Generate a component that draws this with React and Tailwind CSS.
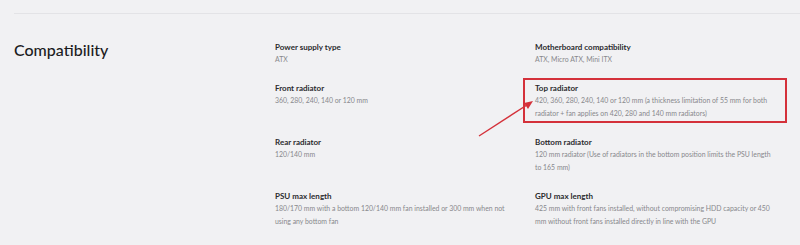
import React from "react";

/* spec rows: left column / right column */
const rows = [
  [
    { label: "Power supply type", lines: ["ATX"] },
    { label: "Motherboard compatibility", lines: ["ATX, Micro ATX, Mini ITX"] },
  ],
  [
    { label: "Front radiator", lines: ["360, 280, 240, 140 or 120 mm"] },
    {
      label: "Top radiator",
      lines: [
        "420, 360, 280, 240, 140 or 120 mm (a thickness limitation of 55 mm for both",
        "radiator + fan applies on 420, 280 and 140 mm radiators)",
      ],
      marked: true,
    },
  ],
  [
    { label: "Rear radiator", lines: ["120/140 mm"] },
    {
      label: "Bottom radiator",
      lines: [
        "120 mm radiator (Use of radiators in the bottom position limits the PSU length",
        "to 165 mm)",
      ],
    },
  ],
  [
    {
      label: "PSU max length",
      lines: [
        "180/170 mm with a bottom 120/140 mm fan installed or 300 mm when not",
        "using any bottom fan",
      ],
    },
    {
      label: "GPU max length",
      lines: [
        "425 mm with front fans installed, without compromising HDD capacity or 450",
        "mm without front fans installed directly in line with the GPU",
      ],
    },
  ],
];

const Spec = ({ item }) => (
  <div className="relative">
    <div className="text-[8px] leading-[12px] font-bold text-[#2b2b2e]">{item.label}</div>
    {item.lines.map((l, i) => (
      <div key={i} className="text-[6.9px] leading-[13px] text-[#88888c] whitespace-nowrap">
        {l}
      </div>
    ))}
    {item.marked && (
      <>
        <div className="absolute -left-[12px] -top-[4px] w-[264px] h-[45px] border-2 border-[#d4313a] pointer-events-none" />
        <svg
          className="absolute -left-[57px] top-[19px] overflow-visible"
          width="56"
          height="36"
          viewBox="0 0 56 36"
        >
          <line x1="1" y1="35" x2="52" y2="2" stroke="#d4313a" strokeWidth="1.4" />
          <polygon points="55,0 46,2 50,8" fill="#d4313a" />
        </svg>
      </>
    )}
  </div>
);

export default function App() {
  return (
    <div
      className="w-[800px] h-[245px] bg-[#f1f1f3] overflow-hidden"
      style={{ fontFamily: 'Lato, "Liberation Sans", sans-serif' }}
    >
      <div className="ml-[14px] border-t border-[#e3e3e6] mt-[13px]" />
      <div className="flex pl-[14px] pt-[27px]">
        <h2 className="w-[261px] text-[16px] leading-[20px] font-medium text-[#1c1c1e] -mt-[1px]">
          Compatibility
        </h2>
        <div className="flex flex-col gap-[16px]">
          {rows.map((row, r) => (
            <div key={r} className="grid grid-cols-[260px_260px]">
              {row.map((item, c) => (
                <Spec key={c} item={item} />
              ))}
            </div>
          ))}
        </div>
      </div>
    </div>
  );
}
